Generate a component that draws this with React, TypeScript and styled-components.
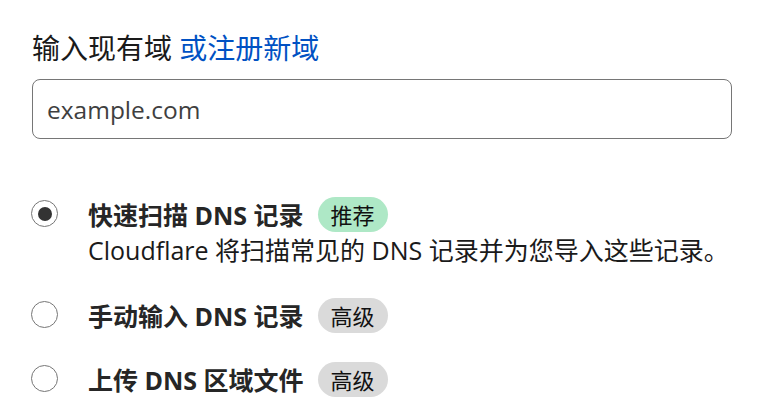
import React from "react";
import styled, { createGlobalStyle } from "styled-components";

const Global = createGlobalStyle`
  html, body { margin: 0; padding: 0; background: #fff; }
  body { font-family: "Open Sans", "Noto Sans CJK SC", sans-serif; color: #1a1a1a; }
`;

const Page = styled.div`
  padding: 30px 0 0 32px;
  width: 700px;
`;

const Label = styled.label`
  display: block;
  font-size: 28px;
  line-height: 36px;
  color: #1a1a1a;
`;

const Link = styled.a`
  color: #0051c3;
  text-decoration: none;
`;

const Input = styled.input`
  box-sizing: border-box;
  display: block;
  margin-top: 13px;
  width: 700px;
  height: 60px;
  border: 1px solid #767676;
  border-radius: 8px;
  padding: 0 14px;
  font-family: "Open Sans", "Noto Sans CJK SC", sans-serif;
  font-size: 24.5px;
  color: #1a1a1a;
  outline: none;
  &::placeholder { color: #3f3f3f; opacity: 1; }
`;

const Options = styled.div`
  margin-top: 57px;
  display: flex;
  flex-direction: column;
  gap: 28px;
`;

const Option = styled.div`
  display: grid;
  grid-template-columns: 56px 1fr;
  align-items: start;
`;

const Radio = styled.span<{ $checked?: boolean }>`
  box-sizing: border-box;
  margin: 4px 0 0 -1px;
  width: 27px;
  height: 27px;
  border-radius: 50%;
  border: 1px solid #767676;
  display: flex;
  align-items: center;
  justify-content: center;
  &::after {
    content: "";
    width: 14px;
    height: 14px;
    border-radius: 50%;
    background: #333;
    display: ${(p) => (p.$checked ? "block" : "none")};
  }
`;

const Title = styled.div`
  display: flex;
  align-items: center;
  height: 36px;
  font-size: 25px;
  font-weight: 700;
  color: #262626;
`;

const Badge = styled.span<{ $tone: "green" | "gray" }>`
  margin-left: 14px;
  height: 35px;
  padding: 0 13px;
  border-radius: 18px;
  display: inline-flex;
  align-items: center;
  font-size: 22px;
  font-weight: 400;
  color: #111;
  background: ${(p) => (p.$tone === "green" ? "#aee8c6" : "#dadada")};
`;

const Desc = styled.div`
  font-size: 25px;
  line-height: 37px;
  color: #1a1a1a;
`;

export default function App() {
  return (
    <>
      <Global />
      <Page>
        <Label>
          输入现有域 <Link href="#">或注册新域</Link>
        </Label>
        <Input placeholder="example.com" />
        <Options>
          <Option>
            <Radio $checked />
            <div>
              <Title>
                快速扫描 DNS 记录<Badge $tone="green">推荐</Badge>
              </Title>
              <Desc>Cloudflare 将扫描常见的 DNS 记录并为您导入这些记录。</Desc>
            </div>
          </Option>
          <Option>
            <Radio />
            <Title>
              手动输入 DNS 记录<Badge $tone="gray">高级</Badge>
            </Title>
          </Option>
          <Option>
            <Radio />
            <Title>
              上传 DNS 区域文件<Badge $tone="gray">高级</Badge>
            </Title>
          </Option>
        </Options>
      </Page>
    </>
  );
}
